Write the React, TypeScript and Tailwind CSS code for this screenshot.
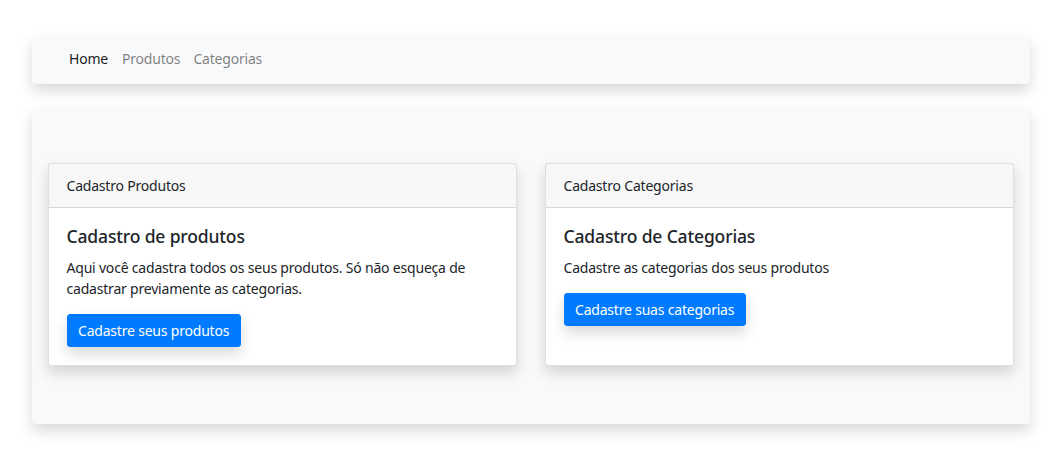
export default function App() {
  return (
    <div className="min-h-[467px] bg-white pt-9 px-8 text-[14px] leading-[21px] text-[#212529] tracking-[-0.2px]" style={{ fontFamily: '"Segoe UI", "Noto Sans", sans-serif' }}>
      <nav className="h-12 bg-[#f8f9fa] rounded shadow-[0_7px_14px_rgba(0,0,0,0.15)] flex items-center pl-[30px] pb-[3px]">
        <a className="px-[7px] text-[rgba(0,0,0,0.9)]">Home</a>
        <a className="pl-[7px] pr-[6px] text-[rgba(0,0,0,0.5)]">Produtos</a>
        <a className="px-[7px] text-[rgba(0,0,0,0.5)]">Categorias</a>
      </nav>
      <main className="mt-6 bg-[#f8f9fa] rounded shadow-[0_7px_14px_rgba(0,0,0,0.15)] pt-[55px] pb-[58px] px-4 grid grid-cols-2 gap-7 items-stretch">
        <div className="bg-white border border-[rgba(0,0,0,0.125)] rounded-[3px] shadow-[0_7px_14px_rgba(0,0,0,0.15)]">
          <div className="bg-[rgba(0,0,0,0.03)] border-b border-[rgba(0,0,0,0.125)] px-[17.5px] py-[11px]">Cadastro Produtos</div>
          <div className="px-[17.5px] pt-[18px] pb-[18px]">
            <h5 className="text-[17.5px] leading-[21px] font-medium mb-[9.5px] tracking-[-0.15px]">Cadastro de produtos</h5>
            <p className="mb-[15px]">Aqui você cadastra todos os seus produtos. Só não esqueça de cadastrar previamente as categorias.</p>
            <button className="bg-[#007bff] text-white rounded-[3px] border border-[#007bff] px-[10.5px] py-[5px] leading-[21px] shadow-[0_7px_14px_rgba(0,0,0,0.15)]">Cadastre seus produtos</button>
          </div>
        </div>
        <div className="bg-white border border-[rgba(0,0,0,0.125)] rounded-[3px] shadow-[0_7px_14px_rgba(0,0,0,0.15)]">
          <div className="bg-[rgba(0,0,0,0.03)] border-b border-[rgba(0,0,0,0.125)] px-[17.5px] py-[11px]">Cadastro Categorias</div>
          <div className="px-[17.5px] pt-[18px] pb-[18px]">
            <h5 className="text-[17.5px] leading-[21px] font-medium mb-[9.5px] tracking-[-0.15px]">Cadastro de Categorias</h5>
            <p className="mb-[15px]">Cadastre as categorias dos seus produtos</p>
            <button className="bg-[#007bff] text-white rounded-[3px] border border-[#007bff] px-[10.5px] py-[5px] leading-[21px] shadow-[0_7px_14px_rgba(0,0,0,0.15)]">Cadastre suas categorias</button>
          </div>
        </div>
      </main>
    </div>
  );
}
